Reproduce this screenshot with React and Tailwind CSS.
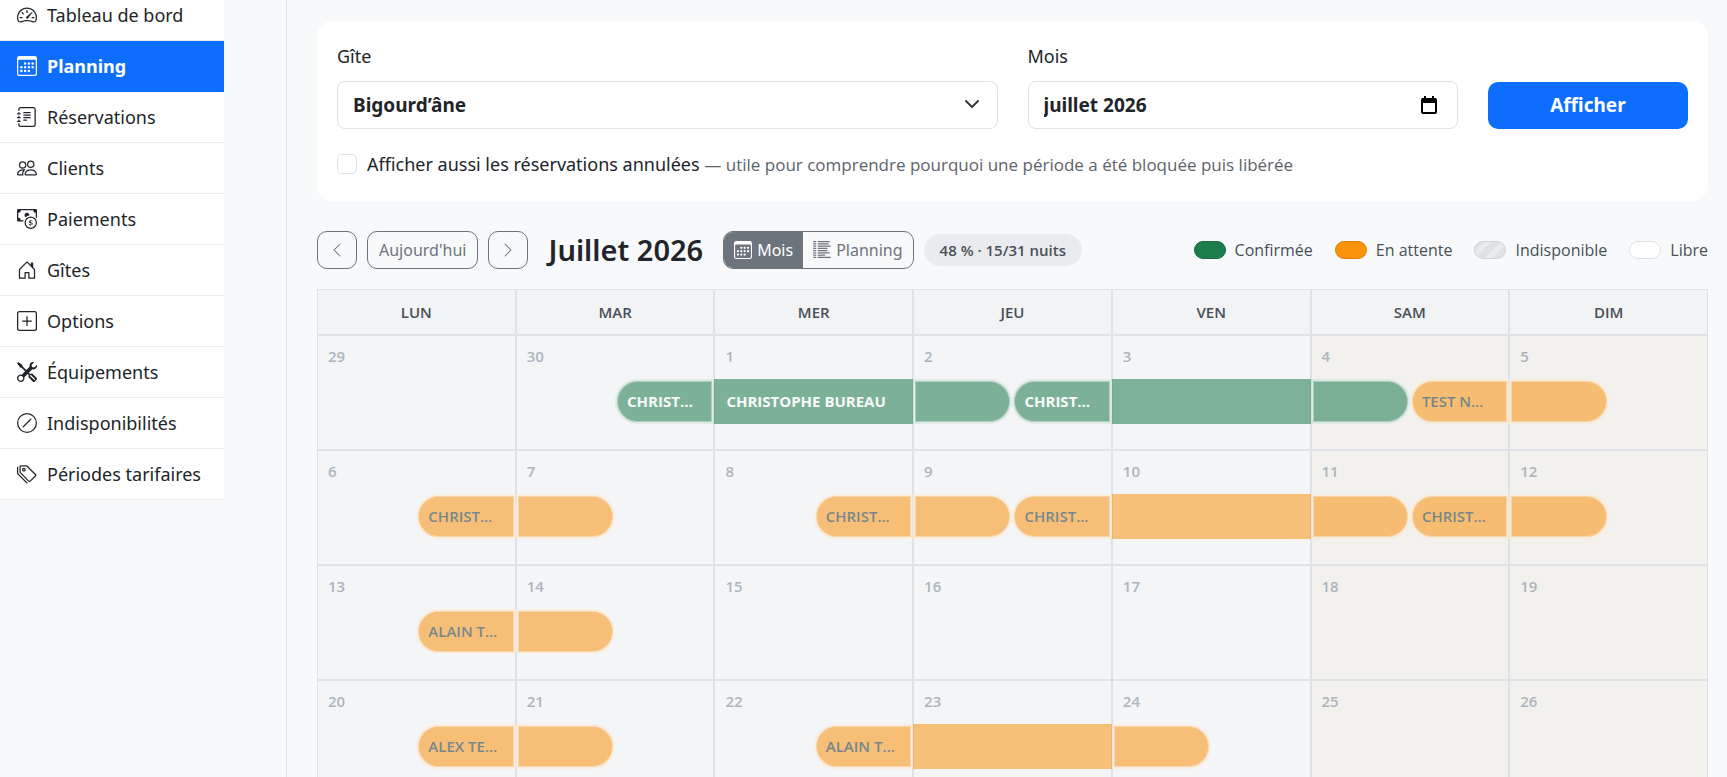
import { useState } from 'react';
import clsx from 'clsx';
import {
  BsCalendar3,
  BsCashCoin,
  BsChevronLeft,
  BsChevronRight,
  BsHouseDoor,
  BsJournalText,
  BsListColumnsReverse,
  BsPeople,
  BsPlusSquare,
  BsSlashCircle,
  BsSpeedometer2,
  BsTags,
  BsTools,
} from 'react-icons/bs';

const MENU = [
  { label: 'Tableau de bord', icon: BsSpeedometer2 },
  { label: 'Planning', icon: BsCalendar3, active: true },
  { label: 'Réservations', icon: BsJournalText },
  { label: 'Clients', icon: BsPeople },
  { label: 'Paiements', icon: BsCashCoin },
  { label: 'Gîtes', icon: BsHouseDoor },
  { label: 'Options', icon: BsPlusSquare },
  { label: 'Équipements', icon: BsTools },
  { label: 'Indisponibilités', icon: BsSlashCircle },
  { label: 'Périodes tarifaires', icon: BsTags },
];

const JOURS = ['LUN', 'MAR', 'MER', 'JEU', 'VEN', 'SAM', 'DIM'];

const LEGENDE = [
  { label: 'Confirmée', pastille: 'bg-[#1b7d4c] border-[#176b41]' },
  { label: 'En attente', pastille: 'bg-[#fa920a] border-[#e08208]' },
  {
    label: 'Indisponible',
    pastille:
      'border-[#ced4da] bg-[repeating-linear-gradient(135deg,#dee2e6_0,#dee2e6_6px,#e9ecef_6px,#e9ecef_12px)]',
  },
  { label: 'Libre', pastille: 'bg-white border-[#dee2e6]' },
];

// arrivee = moitié droite du jour, depart = moitié gauche, plein = journée entière
const SEMAINES = [
  [
    { jour: 29 },
    { jour: 30, arrivee: { statut: 'confirmee', nom: 'CHRIST…' } },
    { jour: 1, plein: { statut: 'confirmee', nom: 'CHRISTOPHE BUREAU' } },
    { jour: 2, depart: { statut: 'confirmee' }, arrivee: { statut: 'confirmee', nom: 'CHRIST…' } },
    { jour: 3, plein: { statut: 'confirmee' } },
    { jour: 4, depart: { statut: 'confirmee' }, arrivee: { statut: 'attente', nom: 'TEST N…' } },
    { jour: 5, depart: { statut: 'attente' } },
  ],
  [
    { jour: 6, arrivee: { statut: 'attente', nom: 'CHRIST…' } },
    { jour: 7, depart: { statut: 'attente' } },
    { jour: 8, arrivee: { statut: 'attente', nom: 'CHRIST…' } },
    { jour: 9, depart: { statut: 'attente' }, arrivee: { statut: 'attente', nom: 'CHRIST…' } },
    { jour: 10, plein: { statut: 'attente' } },
    { jour: 11, depart: { statut: 'attente' }, arrivee: { statut: 'attente', nom: 'CHRIST…' } },
    { jour: 12, depart: { statut: 'attente' } },
  ],
  [
    { jour: 13, arrivee: { statut: 'attente', nom: 'ALAIN T…' } },
    { jour: 14, depart: { statut: 'attente' } },
    { jour: 15 },
    { jour: 16 },
    { jour: 17 },
    { jour: 18 },
    { jour: 19 },
  ],
  [
    { jour: 20, arrivee: { statut: 'attente', nom: 'ALEX TE…' } },
    { jour: 21, depart: { statut: 'attente' } },
    { jour: 22, arrivee: { statut: 'attente', nom: 'ALAIN T…' } },
    { jour: 23, plein: { statut: 'attente' } },
    { jour: 24, depart: { statut: 'attente' } },
    { jour: 25 },
    { jour: 26 },
  ],
];

function Sidebar() {
  return (
    <aside className="w-[287px] shrink-0 border-r border-[#dee2e6]">
      <nav className="-mt-[10px] w-56 bg-white">
        {MENU.map(({ label, icon: Icon, active }) => (
          <a
            key={label}
            href="#"
            className={clsx(
              'flex h-[51px] items-center gap-[10px] border-b pl-[17px] text-lg',
              active
                ? 'border-[#0d6efd] bg-[#0d6efd] font-bold text-white'
                : 'border-[#e9ecef] text-[#212529]'
            )}
          >
            <Icon className="size-5 shrink-0" />
            {label}
          </a>
        ))}
      </nav>
    </aside>
  );
}

function Filtres() {
  const [mois, setMois] = useState('juillet 2026');
  const [annulees, setAnnulees] = useState(false);

  return (
    <form
      className="rounded-2xl bg-white px-5 pt-5 pb-[22px]"
      onSubmit={(e) => e.preventDefault()}
    >
      <div className="grid grid-cols-12 items-end gap-x-[30px]">
        <div className="col-span-6">
          <label htmlFor="gite" className="mb-[10px] block text-lg leading-[30px]">
            Gîte
          </label>
          <div className="relative">
            <select
              id="gite"
              className="block h-12 w-full appearance-none rounded-lg border border-[#dee2e6] bg-white px-[15px] text-[19px] font-bold"
            >
              <option>Bigourd’âne</option>
            </select>
            <svg
              viewBox="0 0 16 16"
              className="pointer-events-none absolute top-[15px] right-[18px] size-4 fill-none stroke-[#343a40] stroke-2"
            >
              <path d="m2 5 6 6 6-6" strokeLinecap="round" strokeLinejoin="round" />
            </svg>
          </div>
        </div>

        <div className="col-span-4">
          <label htmlFor="mois" className="mb-[10px] block text-lg leading-[30px]">
            Mois
          </label>
          <div className="flex h-12 items-center rounded-lg border border-[#dee2e6] pr-5 pl-[15px]">
            <input
              id="mois"
              type="text"
              value={mois}
              onChange={(e) => setMois(e.target.value)}
              className="min-w-0 flex-1 text-[19px] font-bold outline-none"
            />
            <button type="button" aria-label="Choisir un mois">
              <svg viewBox="0 0 16 18" className="h-[18px] w-4 fill-black">
                <path d="M3 0h2v2h6V0h2v2h1a2 2 0 0 1 2 2v12a2 2 0 0 1-2 2H2a2 2 0 0 1-2-2V4a2 2 0 0 1 2-2h1zM2 7v9h12V7z" />
              </svg>
            </button>
          </div>
        </div>

        <button
          type="submit"
          className="col-span-2 h-[47px] rounded-[10px] bg-[#0d6efd] text-[19px] font-bold text-white"
        >
          Afficher
        </button>
      </div>

      <div className="mt-5 flex items-center gap-[10px]">
        <input
          id="annulees"
          type="checkbox"
          checked={annulees}
          onChange={(e) => setAnnulees(e.target.checked)}
          className="size-5 shrink-0 appearance-none rounded-[5px] border border-[#dee2e6] bg-white checked:bg-[#0d6efd]"
        />
        <label htmlFor="annulees" className="text-lg leading-[30px]">
          Afficher aussi les réservations annulées{' '}
          <span className="font-['Open_Sans'] text-[17px] leading-none text-[#5c636a]">
            — utile pour comprendre pourquoi une période a été bloquée puis libérée
          </span>
        </label>
      </div>
    </form>
  );
}

function BarreOutils() {
  const bouton =
    'flex h-[38px] items-center justify-center rounded-[10px] border border-[#6c757d] text-[#6c757d]';

  return (
    <div className="mt-[30px] flex items-center">
      <div className="flex gap-[10px]">
        <button type="button" aria-label="Mois précédent" className={clsx(bouton, 'w-10')}>
          <BsChevronLeft className="size-4" />
        </button>
        <button type="button" className={clsx(bouton, 'px-[11px] text-base')}>
          Aujourd'hui
        </button>
        <button type="button" aria-label="Mois suivant" className={clsx(bouton, 'w-10')}>
          <BsChevronRight className="size-4" />
        </button>
      </div>

      <h1 className="ml-5 text-[29px] leading-[38px] font-semibold">Juillet 2026</h1>

      <div className="ml-5 flex h-[38px] overflow-hidden rounded-[10px] border border-[#6c757d] text-base">
        <button type="button" className="flex items-center gap-[5px] bg-[#6c757d] px-[10px] text-white">
          <BsCalendar3 className="size-[18px]" />
          Mois
        </button>
        <button type="button" className="flex items-center gap-[5px] px-[10px] text-[#6c757d]">
          <BsListColumnsReverse className="size-[18px]" />
          Planning
        </button>
      </div>

      <span className="ml-[10px] rounded-full bg-[#e9ecef] px-4 font-['Open_Sans'] text-[15px] leading-8 font-semibold text-[#495057]">
        48 % · 15/31 nuits
      </span>

      <ul className="ml-auto flex items-center gap-[22px] font-['Open_Sans'] text-base text-[#495057]">
        {LEGENDE.map(({ label, pastille }) => (
          <li key={label} className="flex items-center gap-[9px]">
            <span className={clsx('h-[18px] w-8 rounded-full border', pastille)} />
            {label}
          </li>
        ))}
      </ul>
    </div>
  );
}

function Barre({ resa, position }) {
  return (
    <div
      className={clsx(
        "flex h-[45px] items-center overflow-hidden font-['Open_Sans'] text-[15px] whitespace-nowrap opacity-55",
        position === 'plein' && 'w-full px-3',
        position === 'arrivee' && 'ml-auto w-1/2 rounded-l-full border-2 border-white/80 px-[10px]',
        position === 'depart' && 'w-1/2 rounded-r-full border-2 border-white/80 px-[10px]',
        position !== 'plein' && 'shadow-[inset_0_0_0_1px_rgba(255,255,255,0.4)]',
        resa.statut === 'confirmee'
          ? 'bg-[#1b7a4b] font-bold text-white'
          : 'bg-[#fa920f] font-semibold text-[#0f2f35]'
      )}
    >
      {resa.nom}
    </div>
  );
}

function Calendrier() {
  return (
    <table className="mt-5 w-full table-fixed border-separate border-spacing-0 font-['Open_Sans']">
      <thead>
        <tr>
          {JOURS.map((jour) => (
            <th
              key={jour}
              scope="col"
              className="h-[46px] border border-[#dee2e6] bg-[#f1f3f5] text-[15px] font-semibold text-[#495057]"
            >
              {jour}
            </th>
          ))}
        </tr>
      </thead>
      <tbody>
        {SEMAINES.map((semaine) => (
          <tr key={semaine[0].jour}>
            {semaine.map(({ jour, depart, arrivee, plein }, i) => (
              <td
                key={jour}
                className={clsx(
                  'h-[115px] border border-[#dee2e6] p-0 align-top',
                  i > 4 ? 'bg-[#f2f1ed]' : 'bg-[#f3f5f7]'
                )}
              >
                <div className="px-[10px] pt-2 pb-[11px] text-[15px] leading-6 font-semibold text-[#adb5bd]">
                  {jour}
                </div>
                <div className="-mx-px flex">
                  {depart && <Barre resa={depart} position="depart" />}
                  {plein && <Barre resa={plein} position="plein" />}
                  {arrivee && <Barre resa={arrivee} position="arrivee" />}
                </div>
              </td>
            ))}
          </tr>
        ))}
      </tbody>
    </table>
  );
}

export default function App() {
  return (
    <div className="flex h-screen overflow-hidden bg-[#f8f9fb] font-['Segoe_UI','Noto_Sans','Open_Sans',sans-serif] text-[#212529]">
      <Sidebar />
      <main className="min-w-0 flex-1 pt-[21px] pr-[19px] pl-[30px]">
        <Filtres />
        <BarreOutils />
        <Calendrier />
      </main>
    </div>
  );
}
